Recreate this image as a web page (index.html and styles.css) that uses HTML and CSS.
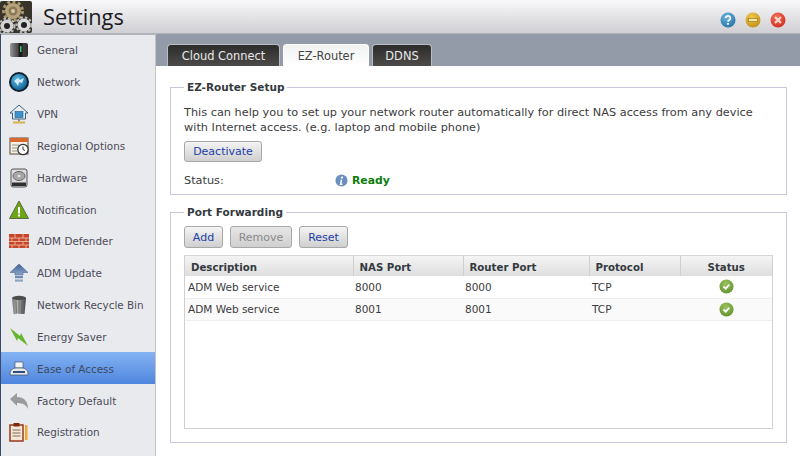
FILE: index.html
```html
<!DOCTYPE html>
<html lang="en">
<head>
<meta charset="utf-8">
<title>Settings</title>
<link rel="stylesheet" href="styles.css">
</head>
<body>
<svg class="defs" aria-hidden="true">
  <defs>
    <linearGradient id="gDark" x1="0" y1="0" x2="1" y2="0"><stop offset="0" stop-color="#9a9a9a"/><stop offset=".35" stop-color="#555"/><stop offset="1" stop-color="#2e2e2e"/></linearGradient>
    <radialGradient id="gGlobe" cx=".4" cy=".35" r=".7"><stop offset="0" stop-color="#5cc0ea"/><stop offset="1" stop-color="#0f5f92"/></radialGradient>
    <linearGradient id="gUp" x1="0" y1="0" x2="0" y2="1"><stop offset="0" stop-color="#3f6296"/><stop offset="1" stop-color="#8ba6cc"/></linearGradient>
    <linearGradient id="gBin" x1="0" y1="0" x2="1" y2="0"><stop offset="0" stop-color="#777"/><stop offset=".4" stop-color="#b0b0b0"/><stop offset="1" stop-color="#3f3f3f"/></linearGradient>
    <radialGradient id="gBlue" cx=".4" cy=".3" r=".8"><stop offset="0" stop-color="#6fb5e0"/><stop offset="1" stop-color="#1f6ea6"/></radialGradient>
    <radialGradient id="gYel" cx=".4" cy=".3" r=".8"><stop offset="0" stop-color="#f0ca4a"/><stop offset="1" stop-color="#c08a12"/></radialGradient>
    <radialGradient id="gRed" cx=".4" cy=".3" r=".8"><stop offset="0" stop-color="#f0705a"/><stop offset="1" stop-color="#cf2a18"/></radialGradient>
    <radialGradient id="gOk" cx=".45" cy=".3" r=".8"><stop offset="0" stop-color="#98c25c"/><stop offset="1" stop-color="#5e8e2c"/></radialGradient>
  </defs>
</svg>
<div class="app">
  <header class="titlebar">
    <div class="brand">
      <svg class="logo" viewBox="0 0 32 32" aria-hidden="true">
        <rect width="32" height="32" rx="2" fill="#38342c"/>
        <circle cx="13" cy="10" r="9.500" fill="none" stroke="#a8966a" stroke-width="3" stroke-dasharray="3 2.500"/>
        <circle cx="13" cy="10" r="8" fill="#b5a37a"/>
        <circle cx="13" cy="10" r="4.500" fill="#8b7a55"/>
        <circle cx="13" cy="10" r="2" fill="#d6cba8"/>
        <circle cx="7" cy="25" r="7.500" fill="none" stroke="#bdbdbd" stroke-width="2" stroke-dasharray="2.500 2"/>
        <circle cx="7" cy="25" r="6.500" fill="#d2d2d2"/><circle cx="7" cy="25" r="3" fill="#222"/>
        <circle cx="24" cy="24" r="7.500" fill="none" stroke="#bdbdbd" stroke-width="2" stroke-dasharray="2.500 2"/>
        <circle cx="24" cy="24" r="6.500" fill="#dadada"/><circle cx="24" cy="24" r="3" fill="#222"/>
      </svg>
      <h1 class="title">Settings</h1>
    </div>
    <div class="winbtns">
      <svg class="winbtn" viewBox="0 0 16 16"><circle cx="8" cy="8" r="7.500" fill="url(#gBlue)"/><path d="M5.600 6a2.400 2.200 0 1 1 3.600 2c-.9.5-1.200.8-1.200 1.800" fill="none" stroke="#fff" stroke-width="1.700"/><rect x="7.100" y="11" width="1.800" height="1.800" fill="#fff"/></svg>
      <svg class="winbtn" viewBox="0 0 16 16"><circle cx="8" cy="8" r="7.500" fill="url(#gYel)"/><rect x="3.500" y="6.500" width="9" height="3" fill="#f6e6a8" stroke="#8d6a10" stroke-width=".6"/></svg>
      <svg class="winbtn" viewBox="0 0 16 16"><circle cx="8" cy="8" r="7.500" fill="url(#gRed)"/><path d="M5 5l6 6M11 5l-6 6" stroke="#f8d6cf" stroke-width="2.200"/></svg>
    </div>
  </header>
  <div class="body">
    <nav class="sidebar">
      <a class="navitem"><svg class="ico" viewBox="0 0 20 20"><rect x="1" y="3" width="18" height="14" rx="2" fill="url(#gDark)"/><rect x="9.500" y="3" width="4" height="14" fill="#1c1c1c"/><rect x="11" y="6" width="1.500" height="6" fill="#3fc06a"/></svg><span>General</span></a>
      <a class="navitem"><svg class="ico" viewBox="0 0 20 20"><circle cx="10" cy="10" r="10" fill="#10202c"/><circle cx="10" cy="10" r="8" fill="url(#gGlobe)"/><path d="M5 9l4-3 2 2 4-2-2 5-3-1-1 4-2-3z" fill="#d5edf8"/></svg><span>Network</span></a>
      <a class="navitem"><svg class="ico" viewBox="0 0 20 20"><path d="M10 1L1 9h2.500v6h13V9H19z" fill="#e6edf2" stroke="#3f627e"/><rect x="6" y="7.500" width="8" height="6" fill="#3b94d0" stroke="#26587c" stroke-width=".6"/><rect x="9" y="15" width="2" height="2.500" fill="#888"/><rect x="4" y="17.500" width="12" height="2" fill="#d8b24a"/></svg><span>VPN</span></a>
      <a class="navitem"><svg class="ico" viewBox="0 0 20 20"><rect x="1" y="2" width="18" height="16" fill="#f4efe4" stroke="#5b4a3a"/><rect x="1" y="2" width="18" height="4" fill="#d9682d"/><path d="M3 9h7M3 12h5M3 15h5" stroke="#998"/><circle cx="14" cy="13.500" r="5.200" fill="#fff" stroke="#333" stroke-width="1.300"/><path d="M14 10.500v3l2 1" stroke="#333" fill="none"/></svg><span>Regional Options</span></a>
      <a class="navitem"><svg class="ico" viewBox="0 0 20 20"><rect x="2" y="1" width="16" height="18" rx="2" fill="#dcdcdc" stroke="#555"/><ellipse cx="10" cy="8" rx="6" ry="4.500" fill="#a8a8a8" stroke="#666"/><ellipse cx="10" cy="8" rx="1.500" ry="1" fill="#eee"/><rect x="3" y="14.500" width="14" height="3.500" fill="#2e2e2e"/></svg><span>Hardware</span></a>
      <a class="navitem"><svg class="ico" viewBox="0 0 20 20"><path d="M10 1L.5 18.500h19z" fill="#6da614" stroke="#5a6a48"/><rect x="9" y="7" width="2" height="6.500" fill="#fff"/><rect x="9" y="14.500" width="2" height="2" fill="#fff"/></svg><span>Notification</span></a>
      <a class="navitem"><svg class="ico" viewBox="0 0 20 20"><rect y="3" width="20" height="14" fill="#c9452a"/><path d="M0 7h20M0 10.500h20M0 14h20M6 3v4M14 3v4M3 7v3.500M10 7v3.500M17 7v3.500M6 10.500V14M14 10.500V14M3 14v3M10 14v3M17 14v3" stroke="#eec7ad" stroke-width=".8" fill="none"/></svg><span>ADM Defender</span></a>
      <a class="navitem"><svg class="ico" viewBox="0 0 20 20"><path d="M10 1l9 8.500h-5V12H6V9.500H1z" fill="url(#gUp)" stroke="#3f5a80" stroke-width=".5"/><rect x="6" y="13" width="8" height="2.200" fill="#6c8cb8"/><rect x="6" y="16.500" width="8" height="2.200" fill="#8aa4c8"/></svg><span>ADM Update</span></a>
      <a class="navitem"><svg class="ico" viewBox="0 0 20 20"><path d="M3 3h14l-1.500 16h-11z" fill="url(#gBin)"/><path d="M7 6l.5 12M10 6v12M13 6l-.5 12" stroke="#555" stroke-width=".6" fill="none"/><ellipse cx="10" cy="3" rx="7" ry="2.200" fill="#4d4d4d"/></svg><span>Network Recycle Bin</span></a>
      <a class="navitem"><svg class="ico" viewBox="0 0 20 20"><path d="M1 1l10 8 1-3 7 13-10-8-1 3z" fill="#67b52a"/></svg><span>Energy Saver</span></a>
      <a class="navitem active"><svg class="ico" viewBox="0 0 20 20"><rect x="6" y="3" width="8" height="6" fill="#f2f2f2" stroke="#4a5a70" stroke-width=".7"/><path d="M1 15c0-4 3-6 6-6h6c3 0 6 2 6 6v1H1z" fill="#e6eaee" stroke="#3d4a5c" stroke-width=".7"/><rect x="4" y="12" width="12" height="2" fill="#2d4f7a"/></svg><span>Ease of Access</span></a>
      <a class="navitem"><svg class="ico" viewBox="0 0 20 20"><path d="M1 8l7-6v4c6 0 11 3 11 12-2-4-5-6-11-6v3z" fill="#9b9b9b"/></svg><span>Factory Default</span></a>
      <a class="navitem"><svg class="ico" viewBox="0 0 20 20"><rect x="1" y="3" width="13" height="16" fill="#f3e8da" stroke="#9a3a1a" stroke-width="1.500"/><rect x="4.500" y="1" width="6" height="3.500" fill="#7a2a12"/><path d="M3.500 8h8M3.500 11h8M3.500 14h8" stroke="#8a6a55"/><rect x="16" y="3" width="2.500" height="15" fill="#eea92c"/></svg><span>Registration</span></a>
    </nav>
    <main class="content">
      <div class="tabs">
        <a class="tab">Cloud Connect</a>
        <a class="tab tab-on">EZ-Router</a>
        <a class="tab">DDNS</a>
      </div>
      <div class="panel">
        <fieldset class="group group-setup">
          <legend>EZ-Router Setup</legend>
          <p class="desc">This can help you to set up your network router automatically for direct NAS access from any device with Internet access. (e.g. laptop and mobile phone)</p>
          <button class="btn btn-deact">Deactivate</button>
          <div class="status">
            <span class="status-label">Status:</span>
            <svg class="info" viewBox="0 0 14 14"><circle cx="7" cy="7" r="6.500" fill="#6a8fc0"/><circle cx="7.500" cy="3.800" r="1.200" fill="#fff"/><path d="M7 6L6 11h2" stroke="#fff" stroke-width="1.600" fill="none"/></svg>
            <strong class="ready">Ready</strong>
          </div>
        </fieldset>
        <fieldset class="group group-ports">
          <legend>Port Forwarding</legend>
          <div class="toolbar">
            <button class="btn">Add</button>
            <button class="btn btn-off">Remove</button>
            <button class="btn">Reset</button>
          </div>
          <div class="tablewrap">
            <table class="grid">
              <colgroup><col class="c1"><col class="c2"><col class="c3"><col class="c4"><col class="c5"></colgroup>
              <thead><tr><th>Description</th><th>NAS Port</th><th>Router Port</th><th>Protocol</th><th class="ctr">Status</th></tr></thead>
              <tbody>
                <tr><td>ADM Web service</td><td>8000</td><td>8000</td><td>TCP</td><td class="ctr"><svg class="ok" viewBox="0 0 16 16"><circle cx="8" cy="8" r="7.500" fill="url(#gOk)"/><path d="M4.800 8l2.300 2.300 4-4.300" stroke="#fff" stroke-width="2" fill="none"/></svg></td></tr>
                <tr class="alt"><td>ADM Web service</td><td>8001</td><td>8001</td><td>TCP</td><td class="ctr"><svg class="ok" viewBox="0 0 16 16"><circle cx="8" cy="8" r="7.500" fill="url(#gOk)"/><path d="M4.800 8l2.300 2.300 4-4.300" stroke="#fff" stroke-width="2" fill="none"/></svg></td></tr>
              </tbody>
            </table>
          </div>
        </fieldset>
      </div>
    </main>
  </div>
</div>
</body>
</html>
```
FILE: styles.css
```css
* { box-sizing: border-box; }
html, body { margin: 0; padding: 0; }
body { width: 800px; height: 456px; overflow: hidden; background: #fff; font: 11px "DejaVu Sans", Verdana, sans-serif; color: #3c3c3c; }
.defs { position: absolute; width: 0; height: 0; }
.app { display: flex; flex-direction: column; height: 456px; }
.titlebar { height: 34px; flex: none; display: flex; justify-content: space-between; align-items: center; background: linear-gradient(#f8f8fa, #d0d0d4); border-bottom: 1px solid #b2b4bb; }
.brand { display: flex; align-items: center; height: 33px; }
.logo { width: 32px; height: 32px; display: block; }
.title { margin: 0 0 0 11px; font: 400 21.800px "Open Sans", sans-serif; color: #1b1b1f; }
.winbtns { display: flex; gap: 9px; padding-right: 14px; margin-top: 7px; }
.winbtn { width: 16px; height: 16px; display: block; }
.body { flex: 1; display: flex; min-height: 0; }
.sidebar { width: 156px; flex: none; background: #e9eaee; border-left: 1px solid #3a4a68; border-right: 1px solid #c2c4ca; box-shadow: inset 0 1px #b2b4bb; }
.navitem { display: flex; align-items: center; height: 31.830px; padding: 1px 0 0 8px; color: #4c4c58; font-size: 10.400px; }
.navitem span { margin-left: 8px; white-space: nowrap; }
.ico { width: 20px; height: 20px; flex: none; }
.active { background: linear-gradient(#84b3f3, #4f86de); color: #3d4a60; }
.content { flex: 1; min-width: 0; display: flex; flex-direction: column; background: #fff; }
.tabs { height: 32px; flex: none; display: flex; gap: 3px; align-items: flex-end; padding-left: 11px; background: #949ba8; }
.tab { display: flex; align-items: center; justify-content: center; height: 22px; border-radius: 4px 4px 0 0; border: 1px solid #b9bdc6; border-bottom: 0; background: linear-gradient(#2c2c2c, #4d4b49); color: #e8e8e8; font-size: 11.400px; }
.tab:nth-child(1) { width: 113px; }
.tab:nth-child(2) { width: 86px; }
.tab:nth-child(3) { width: 60px; }
.tab-on { background: linear-gradient(#f0f2f2, #fff); color: #444; border-color: #fff; }
.panel { padding: 14px 13px 0 14px; }
.group { margin: 0; padding: 0 13px; border: 1px solid #c8c8da; border-radius: 0; min-width: 0; }
.group legend { padding: 0 3px; margin-left: 0; font-size: 10.500px; font-weight: 700; color: #333a40; line-height: 14px; }
.group-setup { height: 115px; }
.group-ports { height: 238px; margin-top: 10px; }
.desc { margin: 11px 0 6px; line-height: 15px; font-size: 11.300px; color: #3c3c3c; }
.btn { display: block; height: 22px; padding: 0; border: 1px solid #a8a8a8; border-radius: 3px; background: linear-gradient(#f4f4f4, #cfcfcf); color: #1c3ea6; font: 11px "DejaVu Sans", sans-serif; }
.btn-deact { width: 78px; height: 21px; }
.btn-off { color: #8a8a8a; background: linear-gradient(#e6e6e6, #cfcfcf); }
.status { display: flex; align-items: center; margin-top: 11px; height: 15px; font-size: 11.300px; }
.status-label { width: 151px; }
.info { width: 13px; height: 13px; margin-right: 4px; }
.ready { color: #0b7d0b; font-size: 10.800px; }
.toolbar { display: flex; gap: 7px; margin-top: 7px; }
.toolbar .btn:nth-child(1) { width: 39px; }
.toolbar .btn:nth-child(2) { width: 62px; }
.toolbar .btn:nth-child(3) { width: 49px; }
.tablewrap { margin-top: 7px; width: 589px; height: 174px; border: 1px solid #d0d0d0; border-top-color: #d6d6d6; }
.grid { width: 100%; table-layout: fixed; border-collapse: collapse; }
.c1 { width: 168px; } .c2 { width: 110px; } .c3 { width: 126px; } .c4 { width: 91px; } .c5 { width: 92px; }
.grid th { height: 20px; padding: 2px 0 0 6px; text-align: left; font-size: 10.200px; color: #333a40; background: linear-gradient(#f4f4f4, #dedede); border-right: 1px solid #cfcfcf; }
.grid th:last-child { border-right: 0; }
.grid td { height: 22px; padding: 0 0 0 3px; font-size: 10.500px; color: #3c3c3c; border-bottom: 1px solid #eee; }
.grid td:nth-child(2) { padding-left: 2px; }
.grid td:nth-child(3) { padding-left: 2px; }
.grid .ctr { text-align: center; padding-left: 0; }
.alt td { background: #fafafa; }
.ok { width: 15px; height: 15px; display: block; margin: 0 auto; }
```
